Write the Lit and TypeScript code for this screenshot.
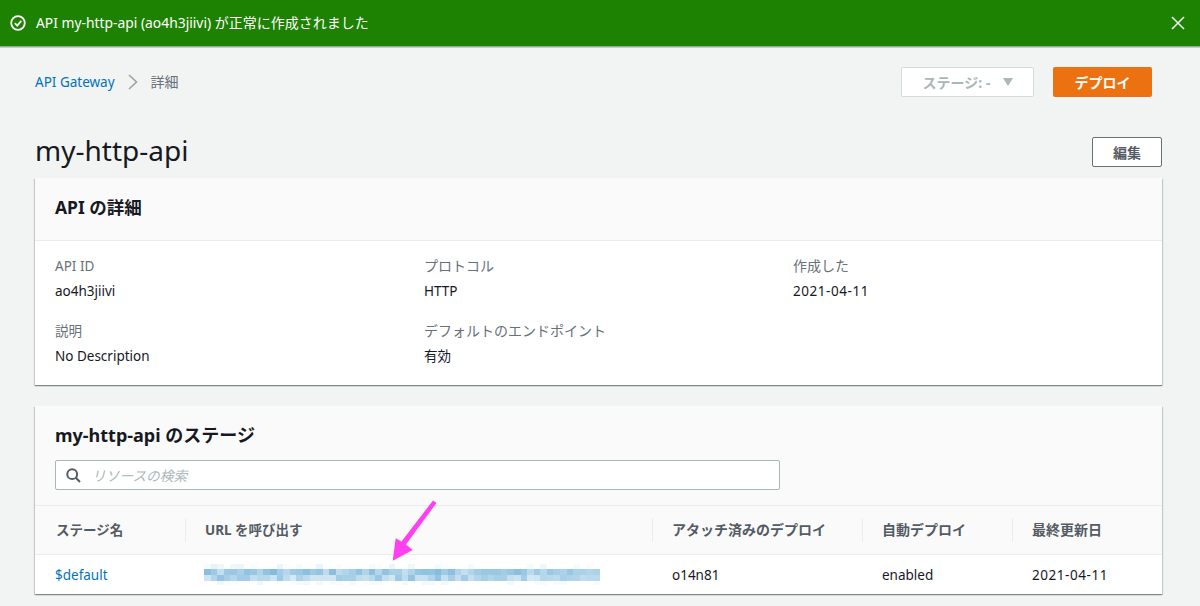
import { LitElement, html, css, svg } from "lit";
import { customElement } from "lit/decorators.js";

const rnd = (() => {
  let s = 12345;
  return () => {
    s = (s * 1103515245 + 12345) & 0x7fffffff;
    return s / 0x7fffffff;
  };
})();
const rowAlpha: [number, number][] = [
  [0.0, 0.09],
  [0.24, 0.24],
  [0.16, 0.26],
  [0.0, 0.06],
];
const COLS = 60;
const mosaic: number[] = [];
rowAlpha.forEach(([base, spread]) => {
  for (let i = 0; i < COLS; i++) {
    const faint = base === 0 && rnd() < 0.6;
    mosaic.push(faint ? 0 : base + rnd() * spread);
  }
});

@customElement("app-root")
export class AppRoot extends LitElement {
  static styles = css`
    :host {
      display: block;
      position: relative;
      width: 1200px;
      height: 606px;
      overflow: hidden;
      background: #f2f3f3;
      color: #16191f;
      font-family: "Noto Sans", "Noto Sans CJK JP", sans-serif;
      font-size: 14px;
    }
    .j {
      font-size: 14px;
      line-height: 1;
    }
    .banner {
      height: 47px;
      box-sizing: border-box;
      background: #1d8102;
      border-bottom: 1px solid #9aa3a0;
      box-shadow: 0 1px 0 #c4cccc;
      color: #fff;
      display: flex;
      align-items: center;
      padding: 0 15px 1px 10px;
      font-size: 13.85px;
    }
    .banner .msg {
      margin-left: 10px;
      flex: 1;
    }
    .banner svg {
      display: block;
    }
    .main {
      padding: 20px 38px 0 35px;
    }
    .topbar {
      display: flex;
      align-items: center;
      height: 30px;
    }
    .crumbs {
      flex: 1;
      display: flex;
      align-items: center;
      font-size: 13.5px;
    }
    .crumbs a {
      color: #0073bb;
    }
    .crumbs svg {
      margin: 0 13px 0 13px;
      display: block;
    }
    .crumbs span {
      color: #687078;
    }
    .stage {
      width: 133px;
      height: 30px;
      box-sizing: border-box;
      background: #fff;
      border: 1px solid #d5dbdb;
      border-radius: 2px;
      color: #aab7b8;
      font-weight: 700;
      font-size: 14px;
      display: flex;
      align-items: center;
      justify-content: center;
      gap: 13px;
      margin-right: 19px;
      padding-left: 1px;
    }
    .tri {
      width: 0;
      height: 0;
      border-left: 5.5px solid transparent;
      border-right: 5.5px solid transparent;
      border-top: 8px solid #aab7b8;
    }
    .deploy {
      width: 99px;
      height: 30px;
      box-sizing: border-box;
      margin-right: 10px;
      background: #ec7211;
      border-radius: 2px;
      color: #fff;
      font-weight: 700;
      font-size: 14px;
      display: flex;
      align-items: center;
      justify-content: center;
    }
    .titlebar {
      display: flex;
      align-items: flex-end;
      justify-content: space-between;
      height: 70px;
      padding-bottom: 11px;
      box-sizing: border-box;
      margin-top: 11px;
    }
    h1 {
      margin: 0;
      font-size: 28px;
      font-weight: 400;
      line-height: 36px;
      color: #16191f;
      position: relative;
      top: 1px;
    }
    .edit {
      width: 70px;
      height: 30px;
      box-sizing: border-box;
      background: #fff;
      border: 1px solid #687078;
      border-radius: 2px;
      color: #545b64;
      font-weight: 700;
      font-size: 14px;
      display: flex;
      align-items: center;
      justify-content: center;
    }
    .card {
      width: 1127px;
      background: #fff;
      box-shadow: 0 1px 1px 0 rgba(0, 28, 36, 0.3),
        1px 1px 1px 0 rgba(0, 28, 36, 0.15),
        -1px 1px 1px 0 rgba(0, 28, 36, 0.15);
    }
    .card + .card {
      margin-top: 21px;
    }
    .head1 {
      background: #fafafa;
      border-bottom: 1px solid #eaeded;
      height: 58px;
      display: flex;
      align-items: center;
      padding: 0 20px 4px;
    }
    h2 {
      margin: 0;
      font-size: 17.5px;
      font-weight: 700;
      line-height: 22px;
    }
    .head2 h2 {
      font-size: 18px;
    }
    .details {
      display: grid;
      grid-template-columns: 369px 369px 1fr;
      grid-auto-rows: 65px;
      padding: 13px 20px 0;
      height: 131px;
    }
    .label {
      color: #687078;
      font-size: 13.5px;
      line-height: 25px;
    }
    .value {
      font-size: 13.5px;
      line-height: 25px;
    }
    .date {
      letter-spacing: 0.55px;
    }
    .head2 {
      background: #fafafa;
      padding: 18px 20px 15px;
      border-bottom: 1px solid #eaeded;
    }
    .search {
      margin-top: 14px;
      width: 725px;
      height: 30px;
      box-sizing: border-box;
      background: #fff;
      border: 1px solid #aab7b8;
      border-radius: 2px;
      display: flex;
      align-items: center;
      padding-left: 10px;
      gap: 11px;
      color: #aab7b8;
      font-style: italic;
      font-size: 13.7px;
    }
    .search svg {
      display: block;
    }
    .thead,
    .trow {
      display: grid;
      grid-template-columns: 150px 467px 210px 150px 150px;
    }
    .thead {
      height: 48px;
      background: #fafafa;
      border-bottom: 1px solid #eaeded;
      align-items: center;
    }
    .th {
      color: #545b64;
      font-weight: 700;
      font-size: 13.5px;
      line-height: 24px;
      padding-left: 19px;
      border-left: 1px solid #eaeded;
    }
    .th:first-child {
      border-left: none;
      padding-left: 21px;
    }
    .trow {
      height: 39px;
      align-items: center;
      font-size: 13.5px;
    }
    .td {
      padding-left: 20px;
    }
    .td a {
      color: #0073bb;
    }
    .mosaic {
      display: grid;
      grid-template-columns: repeat(60, 6.6px);
      grid-template-rows: 5px 6px 6px 4px;
      width: 396px;
      margin-left: -1px;
    }
    .arrow {
      position: absolute;
      left: 385px;
      top: 495px;
      display: block;
    }
  `;

  private field(label: unknown, value: unknown) {
    return html`<div>
      <div class="label">${label}</div>
      <div class="value">${value}</div>
    </div>`;
  }

  render() {
    return html`
      <div class="banner">
        <svg width="16" height="16" viewBox="0 0 16 16" fill="none" stroke="#fff" stroke-width="1.8">
          <circle cx="8" cy="8" r="6.8"></circle>
          <path d="M4.8 8.2 7.2 10.6 11.3 5.8"></path>
        </svg>
        <div class="msg">API my-http-api (ao4h3jiivi) <span class="j">が正常に作成されました</span></div>
        <svg width="14" height="14" viewBox="0 0 14 14" fill="none" stroke="#eef2ee" stroke-width="1.6">
          <path d="M1 1 13 13M13 1 1 13"></path>
        </svg>
      </div>
      <div class="main">
        <div class="topbar">
          <div class="crumbs">
            <a>API Gateway</a>
            <svg width="10" height="16" viewBox="0 0 10 16" fill="none" stroke="#95a5a6" stroke-width="1.6">
              <path d="M1 1 8.5 8 1 15"></path>
            </svg>
            <span class="j">詳細</span>
          </div>
          <div class="stage">ステージ: - <i class="tri"></i></div>
          <div class="deploy">デプロイ</div>
        </div>
        <div class="titlebar">
          <h1>my-http-api</h1>
          <div class="edit">編集</div>
        </div>
        <section class="card">
          <div class="head1"><h2>API の詳細</h2></div>
          <div class="details">
            ${this.field("API ID", "ao4h3jiivi")}
            ${this.field(html`<span class="j">プロトコル</span>`, "HTTP")}
            ${this.field(html`<span class="j">作成した</span>`, html`<span class="date">2021-04-11</span>`)}
            ${this.field("説明", "No Description")}
            ${this.field(html`<span class="j">デフォルトのエンドポイント</span>`, "有効")}
          </div>
        </section>
        <section class="card">
          <div class="head2">
            <h2>my-http-api のステージ</h2>
            <div class="search">
              <svg width="15" height="15" viewBox="0 0 15 15" fill="none" stroke="#545b64" stroke-width="2">
                <circle cx="6.2" cy="6.2" r="4.9"></circle>
                <path d="M9.8 9.8 14 14"></path>
              </svg>
              <span>リソースの検索</span>
            </div>
          </div>
          <div class="thead">
            <div class="th">ステージ名</div>
            <div class="th">URL を呼び出す</div>
            <div class="th"><span class="j">アタッチ済みのデプロイ</span></div>
            <div class="th"><span class="j">自動デプロイ</span></div>
            <div class="th"><span class="j">最終更新日</span></div>
          </div>
          <div class="trow">
            <div class="td"><a>$default</a></div>
            <div class="td">
              <div class="mosaic">
                ${mosaic.map(
                  (a) => html`<i style="background: rgba(0,115,187,${a.toFixed(2)})"></i>`
                )}
              </div>
            </div>
            <div class="td">o14n81</div>
            <div class="td">enabled</div>
            <div class="td"><span class="date">2021-04-11</span></div>
          </div>
        </section>
      </div>
      <svg class="arrow" width="56" height="72" viewBox="385 495 56 72">
        ${svg`<path d="M433 500.5 436.5 503 406 544.5 412.7 550 392.7 560.7 395.7 538.3 401.5 541.5Z" fill="#ff40f0"></path>`}
      </svg>
    `;
  }
}
